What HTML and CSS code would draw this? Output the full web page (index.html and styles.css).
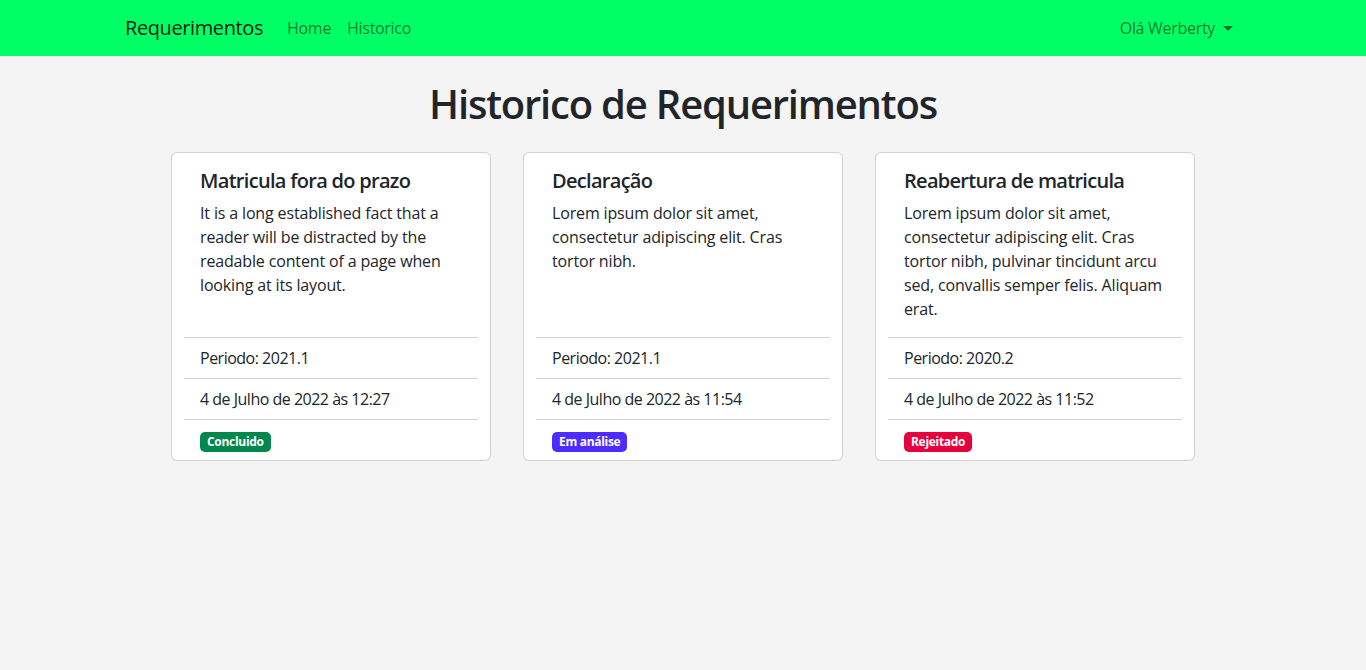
FILE: index.html
```html
<!DOCTYPE html>
<html lang="pt-BR">
<head>
<meta charset="utf-8">
<title>Historico de Requerimentos</title>
<link rel="stylesheet" href="styles.css">
</head>
<body>
<nav class="navbar">
  <div class="container nav-inner">
    <div class="nav-left">
      <a class="brand" href="#">Requerimentos</a>
      <a class="nav-link" href="#">Home</a>
      <a class="nav-link" href="#">Historico</a>
    </div>
    <a class="nav-link dropdown" href="#">Olá Werberty<span class="caret"></span></a>
  </div>
</nav>
<main>
  <h1 class="page-title">Historico de Requerimentos</h1>
  <div class="cards">
    <div class="card">
      <div class="card-body">
        <h5 class="card-title">Matricula fora do prazo</h5>
        <p class="card-text">It is a long established fact that a reader will be distracted by the readable content of a page when looking at its layout.</p>
      </div>
      <ul class="list">
        <li class="item">Periodo: 2021.1</li>
        <li class="item">4 de Julho de 2022 às 12:27</li>
        <li class="item"><span class="badge success">Concluido</span></li>
      </ul>
    </div>
    <div class="card">
      <div class="card-body">
        <h5 class="card-title">Declaração</h5>
        <p class="card-text">Lorem ipsum dolor sit amet, consectetur adipiscing elit. Cras tortor nibh.</p>
      </div>
      <ul class="list">
        <li class="item">Periodo: 2021.1</li>
        <li class="item">4 de Julho de 2022 às 11:54</li>
        <li class="item"><span class="badge progress">Em análise</span></li>
      </ul>
    </div>
    <div class="card">
      <div class="card-body">
        <h5 class="card-title">Reabertura de matricula</h5>
        <p class="card-text">Lorem ipsum dolor sit amet, consectetur adipiscing elit. Cras tortor nibh, pulvinar tincidunt arcu sed, convallis semper felis. Aliquam erat.</p>
      </div>
      <ul class="list">
        <li class="item">Periodo: 2020.2</li>
        <li class="item">4 de Julho de 2022 às 11:52</li>
        <li class="item"><span class="badge danger">Rejeitado</span></li>
      </ul>
    </div>
  </div>
</main>
</body>
</html>
```
FILE: styles.css
```css
* { box-sizing: border-box; }
html, body { margin: 0; padding: 0; }
body {
  font-family: "Open Sans", "Noto Sans", sans-serif;
  font-size: 16px;
  line-height: 24px;
  color: #212529;
  background: #f4f4f4;
  height: 670px;
}
a { text-decoration: none; }
.navbar {
  background: #00ff64;
  padding: 8px 0;
}
.container {
  max-width: 1140px;
  margin: 0 auto;
  padding: 0 12px;
}
.nav-inner {
  display: flex;
  align-items: center;
  justify-content: space-between;
}
.nav-left { display: flex; align-items: center; }
.brand {
  font-size: 20px;
  line-height: 30px;
  padding: 5px 0;
  margin-right: 16px;
  letter-spacing: -0.4px;
  color: rgba(0,0,0,0.9);
}
.nav-link {
  padding: 8px;
  color: rgba(0,0,0,0.55);
  letter-spacing: -0.3px;
  display: inline-flex;
  align-items: center;
}
.caret {
  display: inline-block;
  margin-left: 8px;
  border-top: 5px solid rgba(0,0,0,0.55);
  border-left: 5px solid transparent;
  border-right: 5px solid transparent;
}
.page-title {
  text-align: center;
  font-size: 40px;
  line-height: 48px;
  font-weight: 600;
  letter-spacing: -1.2px;
  margin: 24px 0;
}
.cards {
  display: flex;
  justify-content: center;
  gap: 32px;
}
.card {
  width: 320px;
  background: #fff;
  border: 1px solid rgba(0,0,0,0.175);
  border-radius: 6px;
  padding: 0 12px;
  display: flex;
  flex-direction: column;
}
.card-body {
  flex: 1;
  padding: 16px;
}
.card-title {
  font-size: 20px;
  line-height: 24px;
  font-weight: 600;
  letter-spacing: -0.7px;
  margin: 0 0 8px;
}
.card-text {
  margin: 0;
  letter-spacing: -0.15px;
}
.list {
  list-style: none;
  margin: 0;
  padding: 0;
}
.item {
  padding: 8px 16px;
  letter-spacing: -0.5px;
  border-top: 1px solid rgba(0,0,0,0.175);
}
.badge {
  display: inline-block;
  font-size: 12px;
  font-weight: 700;
  line-height: 12px;
  padding: 4px 7px;
  border-radius: 5px;
  letter-spacing: -0.3px;
  color: #fff;
  vertical-align: middle;
}
.success { background: #00874e; }
.progress { background: #4e2bff; }
.danger { background: #e6003c; }
```
